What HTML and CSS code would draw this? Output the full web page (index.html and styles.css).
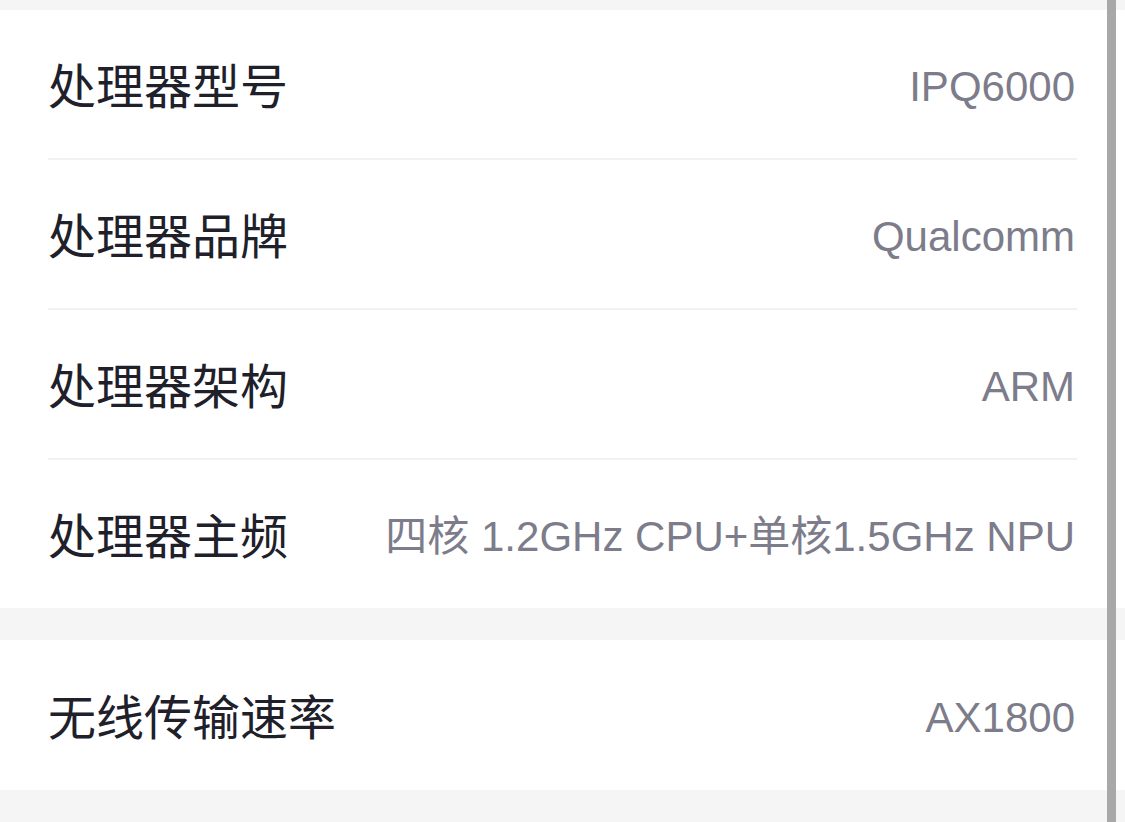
FILE: index.html
```html
<!DOCTYPE html>
<html lang="zh-CN">
<head>
<meta charset="utf-8">
<link rel="stylesheet" href="styles.css">
</head>
<body>
<div class="page">
  <div class="top-gap"></div>
  <section class="card">
    <div class="row"><span class="label">处理器型号</span><span class="value">IPQ6000</span></div>
    <div class="row"><span class="label">处理器品牌</span><span class="value">Qualcomm</span></div>
    <div class="row"><span class="label">处理器架构</span><span class="value">ARM</span></div>
    <div class="row"><span class="label">处理器主频</span><span class="value">四核 1.2GHz CPU+单核1.5GHz NPU</span></div>
  </section>
  <div class="gap"></div>
  <section class="card">
    <div class="row tall"><span class="label">无线传输速率</span><span class="value">AX1800</span></div>
  </section>
  <div class="scrollbar"></div>
</div>
</body>
</html>
```

FILE: styles.css
```css
html, body {
  margin: 0;
  padding: 0;
  background: #f5f5f6;
}
.page {
  position: relative;
  width: 1125px;
  height: 822px;
  overflow: hidden;
  background: #f5f5f6;
}
.top-gap {
  height: 10px;
}
.gap {
  height: 32px;
}
.card {
  background: #ffffff;
  display: flex;
  flex-direction: column;
}
.row {
  height: 148px;
  margin: 0 48px;
  display: flex;
  align-items: center;
  justify-content: space-between;
  border-bottom: 2px solid #f1f1f3;
}
.row:last-child {
  border-bottom: none;
}
.row.tall {
  height: 150px;
}
.label {
  font-family: "Noto Sans CJK SC", sans-serif;
  font-size: 48px;
  color: #20202a;
  line-height: 1;
  margin-top: -2px;
}
.value {
  font-family: "Liberation Sans", "Noto Sans CJK SC", sans-serif;
  font-size: 42px;
  color: #7c7c8a;
  line-height: 1;
  margin-right: 2px;
  margin-top: 5px;
}
.scrollbar {
  position: absolute;
  top: 0;
  left: 1107px;
  width: 9px;
  height: 822px;
  background: #a8a8a8;
}
```
